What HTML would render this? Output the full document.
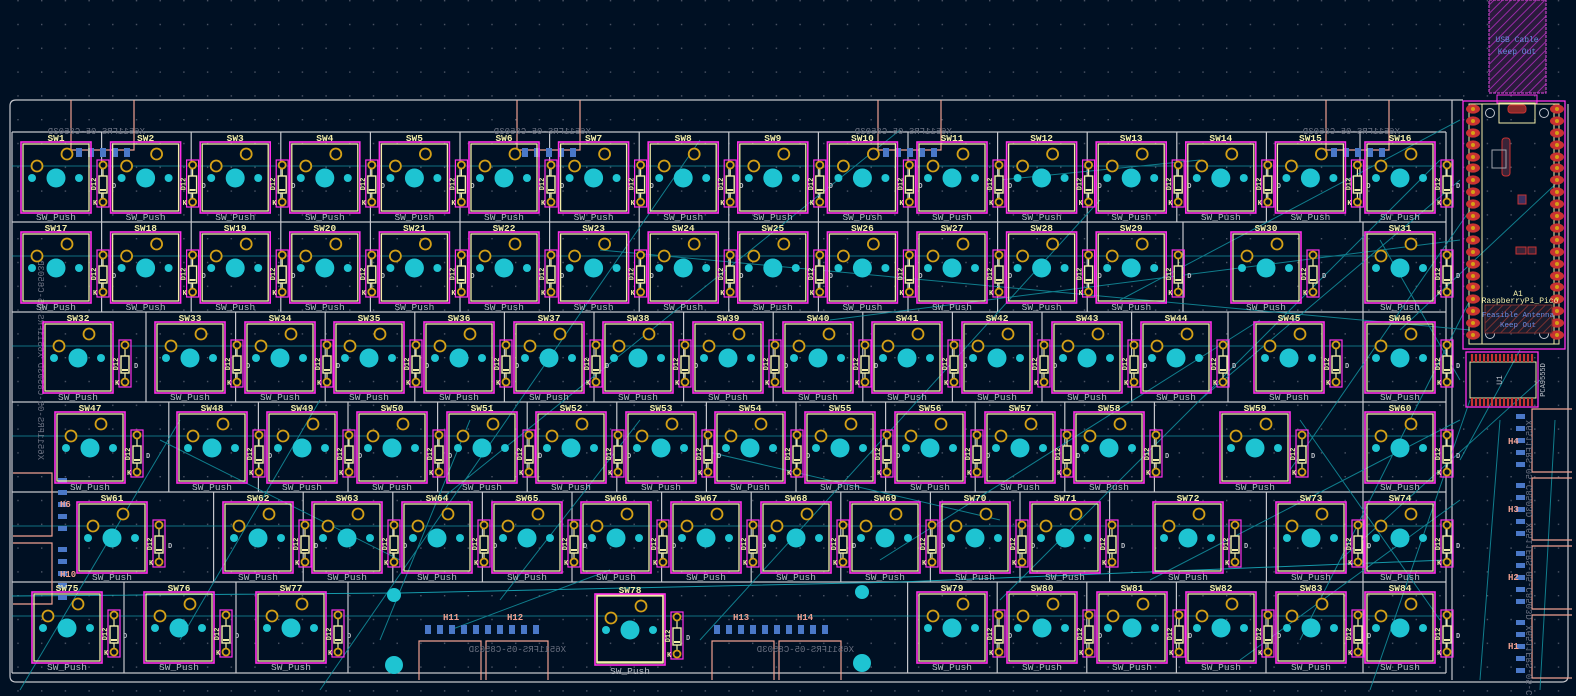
<!DOCTYPE html>
<html><head><meta charset="utf-8"><style>
html,body{margin:0;padding:0;background:#001023;overflow:hidden}
svg{display:block}
text{font-family:"Liberation Mono","DejaVu Sans Mono",monospace}
.l{fill:#f2eda8;font-size:9.5px;text-anchor:middle;font-weight:bold}
.p{fill:#b8bcc4;font-size:9.5px;text-anchor:middle}
.d{fill:#f2eda8;font-size:7px;font-weight:bold}
.g{stroke:#c4c6cc;stroke-width:1.2;fill:none}
.t{stroke:#13909f;stroke-width:1;fill:none;opacity:.85}
.s{stroke:#f0a090;stroke-width:1.2;fill:none}
.m{fill:#6a7080;font-size:9px}
</style></head><body>
<svg width="1576" height="696" viewBox="0 0 1576 696" xmlns="http://www.w3.org/2000/svg">
<defs>
<pattern id="dots" x="17.3" y="0" width="23.7" height="23.8" patternUnits="userSpaceOnUse">
<rect x="0" y="0" width="1.4" height="1.4" fill="#4d5566"/>
</pattern>
<g id="sw">
<rect x="-35" y="10" width="70" height="71" fill="none" stroke="#ff2ee8" stroke-width="1.6"/>
<rect x="-33" y="12" width="66" height="67" fill="none" stroke="#f2eda8" stroke-width="1.3"/>
<circle cx="0" cy="46" r="9.5" fill="#1ec4d2"/>
<circle cx="-24" cy="46" r="4" fill="#1ec4d2"/>
<circle cx="23" cy="46" r="4" fill="#1ec4d2"/>
<circle cx="11" cy="22" r="5.5" fill="#001023" stroke="#d4a017" stroke-width="1.8"/>
<circle cx="-19" cy="34" r="5.5" fill="#001023" stroke="#d4a017" stroke-width="1.8"/>
</g>
<g id="di">
<rect x="41" y="28" width="12" height="47" fill="none" stroke="#ff2ee8" stroke-width="1.2"/>
<line x1="47" y1="33" x2="47" y2="70" stroke="#f2eda8" stroke-width="1.2"/>
<rect x="43" y="44" width="8" height="17" fill="#001023" stroke="#f2eda8" stroke-width="1.4"/>
<rect x="44" y="57" width="6" height="2" fill="#f2eda8"/>
<circle cx="47" cy="33" r="3.5" fill="#001023" stroke="#d4a017" stroke-width="1.8"/>
<circle cx="47" cy="70" r="3.5" fill="#001023" stroke="#d4a017" stroke-width="1.8"/>
<text x="37" y="73" class="d">K</text>
<text transform="translate(40,52) rotate(-90)" class="d" text-anchor="middle" font-size="8">D12</text>
<text x="56" y="56" class="d" style="fill:#b8bcc4">D</text>
</g>
<pattern id="hatch" width="6" height="6" patternUnits="userSpaceOnUse" patternTransform="rotate(45)">
<rect width="6" height="6" fill="#2a1b3c"/><line x1="0" y1="0" x2="0" y2="6" stroke="#9a2aa8" stroke-width="2"/>
</pattern>
<pattern id="hatch2" width="6" height="6" patternUnits="userSpaceOnUse" patternTransform="rotate(45)">
<rect width="6" height="6" fill="#1b1c2c"/><line x1="0" y1="0" x2="0" y2="6" stroke="#7a3030" stroke-width="2"/>
</pattern>
<g id="pad"><ellipse cx="0" cy="0" rx="7" ry="4.6" fill="#c83232"/><circle cx="0" cy="0" r="2" fill="#d4a017"/></g>
</defs>
<rect width="1576" height="696" fill="#001023"/>
<rect width="1576" height="696" fill="url(#dots)"/>

<path d="M16 100 H1463 M10 106 Q10 100 16 100 M10 106 V676 Q10 682 16 682 H1562 Q1568 682 1568 676 V104" class="g"/>
<line x1="1452" y1="100" x2="1452" y2="680" class="g"/>

<g class="g">
<path d="M12 132 H1446 M12 222 H1446 M12 312 H1446 M12 402 H1446 M12 492 H1446 M12 582 H1446 M12 673 H1446 M12 132 V673 M1446 132 V673"/>
<path d="M101.6 132V222M191.2 132V222M280.8 132V222M370.4 132V222M460 132V222M549.6 132V222M639.2 132V222M728.8 132V222M818.4 132V222M908 132V222M997.6 132V222M1087.2 132V222M1176.8 132V222M1266.4 132V222M1360 132V222"/>
<path d="M101.6 222V312M191.2 222V312M280.8 222V312M370.4 222V312M460 222V312M549.6 222V312M639.2 222V312M728.8 222V312M818.4 222V312M908 222V312M997.6 222V312M1087.2 222V312M1183 222V312M1363 222V312"/>
<path d="M146 312V402M235.6 312V402M325.2 312V402M414.8 312V402M504.4 312V402M594 312V402M683.6 312V402M773.2 312V402M862.8 312V402M952.4 312V402M1042 312V402M1131.6 312V402M1228 312V402M1363 312V402"/>
<path d="M168.8 402V492M258.4 402V492M348 402V492M437.6 402V492M527.2 402V492M616.8 402V492M706.4 402V492M796 402V492M885.6 402V492M975.2 402V492M1064.8 402V492M1154.4 402V492M1363 402V492"/>
<path d="M213.6 492V582M303.2 492V582M392.8 492V582M482.4 492V582M572 492V582M661.6 492V582M751.2 492V582M840.8 492V582M930.4 492V582M1020 492V582M1109.6 492V582M1266.4 492V582M1363 492V582"/>
<path d="M124 582V673M236 582V673M348 582V673M907.6 582V673M997.2 582V673M1086.8 582V673M1176.4 582V673M1266 582V673M1363 582V673"/>
</g>

<g class="t">
<path d="M12 166H1446M12 256H1446M12 346H1446M12 436H1446M12 526H1446M12 616H1446" stroke="#19b0c0" opacity=".7"/>
<path d="M320 690 L700 140 M440 500 L900 130 M700 640 L1100 200 M1000 600 L1440 160 M1200 400 L1460 180 M1300 640 L1470 300 M830 320 L1460 240 M600 250 L1470 330 M380 640 L470 420 M1150 580 L1460 420 M20 690 L180 420 M180 640 L320 400 M880 560 L1260 320 M1120 300 L1460 120 M1240 660 L1460 500 M1370 690 L1470 400 M500 600 L640 420 M1000 180 L1200 160 M1380 240 L1460 380 M1290 470 L1470 210 M1400 330 L1560 180 M1340 560 L1540 380 M700 450 L1000 520 M160 440 L400 560 M450 630 L610 570 M1300 420 L1440 620 M1460 460 L1520 350 M1480 680 L1500 420 M1540 690 L1555 420"/>
<path d="M12 596 L400 593 L900 582 L1446 560" stroke="#19b0c0"/>
</g>

<g class="s">
<path d="M71 100V150H134V100 M517 100V150H580V100 M878 100V150H941V100 M1326 100V150H1389V100"/>
<path d="M419 680V641H481V680 M486 680V641H548V680 M712 680V641H774V680 M779 680V641H841V680"/>
<path d="M13 473H52V536H13 M13 543H52V604H13"/>
<path d="M1572 409H1532V472H1572 M1572 478H1532V540H1572 M1572 546H1532V609H1572 M1572 615H1532V678H1572"/>
</g>
<g fill="#4a78c8">
<g id="tp"><rect x="76" y="148" width="6" height="9"/><rect x="88" y="148" width="6" height="9"/><rect x="100" y="148" width="6" height="9"/><rect x="112" y="148" width="6" height="9"/><rect x="124" y="148" width="6" height="9"/></g>
<use href="#tp" x="446"/><use href="#tp" x="807"/><use href="#tp" x="1255"/>
<use href="#tp" x="349" y="477"/><use href="#tp" x="409" y="477"/><use href="#tp" x="638" y="477"/><use href="#tp" x="698" y="477"/>
<g id="lp"><rect x="58" y="478" width="9" height="5"/><rect x="58" y="490" width="9" height="5"/><rect x="58" y="502" width="9" height="5"/><rect x="58" y="514" width="9" height="5"/><rect x="58" y="526" width="9" height="5"/></g>
<use href="#lp" y="69"/>
<g id="rp"><rect x="1516" y="414" width="9" height="5"/><rect x="1516" y="426" width="9" height="5"/><rect x="1516" y="438" width="9" height="5"/><rect x="1516" y="450" width="9" height="5"/><rect x="1516" y="462" width="9" height="5"/></g>
<use href="#rp" y="69"/><use href="#rp" y="137"/><use href="#rp" y="206"/>
</g>
<g class="m">
<text x="62" y="134" transform="scale(-1,1) translate(-207,0)">X6511FRS-05-C8503D</text>
<text x="508" y="134" transform="scale(-1,1) translate(-1099,0)">X6511FRS-05-C8503D</text>
<text x="869" y="134" transform="scale(-1,1) translate(-1821,0)">X6511FRS-05-C8503D</text>
<text x="1317" y="134" transform="scale(-1,1) translate(-2717,0)">X6511FRS-05-C8503D</text>
<text x="400" y="652" transform="scale(-1,1) translate(-966,0)">X6511FRS-05-C8503D</text>
<text x="688" y="652" transform="scale(-1,1) translate(-1542,0)">X6511FRS-05-C8503D</text>
<text transform="translate(38,460) rotate(90) scale(-1,1)">X6511FRS-05-C8503D X6511FRS-05-C8503D</text>
<text transform="translate(1532,420) rotate(90) scale(1,-1)">X6511FRS-05-C8503D X6511FRS-05-C8503D X6511FRS-05-C8503D</text>
</g>
<g fill="#f0a090" font-size="9" font-weight="bold">
<text x="443" y="620">H11</text><text x="507" y="620">H12</text><text x="733" y="620">H13</text><text x="797" y="620">H14</text>
<text x="1508" y="444">H4</text><text x="1508" y="512">H3</text><text x="1508" y="580">H2</text><text x="1508" y="649">H1</text>
<text x="60" y="507">H6</text><text x="60" y="577">H10</text>
</g>
<g fill="#1ec4d2"><circle cx="394" cy="595" r="7"/><circle cx="394" cy="665" r="9"/><circle cx="862" cy="592" r="7"/><circle cx="862" cy="663" r="9"/></g>

<g id="sws">
<g transform="translate(56,132)"><use href="#sw"/><use href="#di"/><text class="l" y="9">SW1</text><text class="p" y="88">SW_Push</text></g>
<g transform="translate(145.6,132)"><use href="#sw"/><use href="#di"/><text class="l" y="9">SW2</text><text class="p" y="88">SW_Push</text></g>
<g transform="translate(235.2,132)"><use href="#sw"/><use href="#di"/><text class="l" y="9">SW3</text><text class="p" y="88">SW_Push</text></g>
<g transform="translate(324.8,132)"><use href="#sw"/><use href="#di"/><text class="l" y="9">SW4</text><text class="p" y="88">SW_Push</text></g>
<g transform="translate(414.4,132)"><use href="#sw"/><use href="#di"/><text class="l" y="9">SW5</text><text class="p" y="88">SW_Push</text></g>
<g transform="translate(504,132)"><use href="#sw"/><use href="#di"/><text class="l" y="9">SW6</text><text class="p" y="88">SW_Push</text></g>
<g transform="translate(593.6,132)"><use href="#sw"/><use href="#di"/><text class="l" y="9">SW7</text><text class="p" y="88">SW_Push</text></g>
<g transform="translate(683.2,132)"><use href="#sw"/><use href="#di"/><text class="l" y="9">SW8</text><text class="p" y="88">SW_Push</text></g>
<g transform="translate(772.8,132)"><use href="#sw"/><use href="#di"/><text class="l" y="9">SW9</text><text class="p" y="88">SW_Push</text></g>
<g transform="translate(862.4,132)"><use href="#sw"/><use href="#di"/><text class="l" y="9">SW10</text><text class="p" y="88">SW_Push</text></g>
<g transform="translate(952,132)"><use href="#sw"/><use href="#di"/><text class="l" y="9">SW11</text><text class="p" y="88">SW_Push</text></g>
<g transform="translate(1041.6,132)"><use href="#sw"/><use href="#di"/><text class="l" y="9">SW12</text><text class="p" y="88">SW_Push</text></g>
<g transform="translate(1131.2,132)"><use href="#sw"/><use href="#di"/><text class="l" y="9">SW13</text><text class="p" y="88">SW_Push</text></g>
<g transform="translate(1220.8,132)"><use href="#sw"/><use href="#di"/><text class="l" y="9">SW14</text><text class="p" y="88">SW_Push</text></g>
<g transform="translate(1310.4,132)"><use href="#sw"/><use href="#di"/><text class="l" y="9">SW15</text><text class="p" y="88">SW_Push</text></g>
<g transform="translate(1400,132)"><use href="#sw"/><use href="#di"/><text class="l" y="9">SW16</text><text class="p" y="88">SW_Push</text></g>

<g transform="translate(56,222)"><use href="#sw"/><use href="#di"/><text class="l" y="9">SW17</text><text class="p" y="88">SW_Push</text></g>
<g transform="translate(145.6,222)"><use href="#sw"/><use href="#di"/><text class="l" y="9">SW18</text><text class="p" y="88">SW_Push</text></g>
<g transform="translate(235.2,222)"><use href="#sw"/><use href="#di"/><text class="l" y="9">SW19</text><text class="p" y="88">SW_Push</text></g>
<g transform="translate(324.8,222)"><use href="#sw"/><use href="#di"/><text class="l" y="9">SW20</text><text class="p" y="88">SW_Push</text></g>
<g transform="translate(414.4,222)"><use href="#sw"/><use href="#di"/><text class="l" y="9">SW21</text><text class="p" y="88">SW_Push</text></g>
<g transform="translate(504,222)"><use href="#sw"/><use href="#di"/><text class="l" y="9">SW22</text><text class="p" y="88">SW_Push</text></g>
<g transform="translate(593.6,222)"><use href="#sw"/><use href="#di"/><text class="l" y="9">SW23</text><text class="p" y="88">SW_Push</text></g>
<g transform="translate(683.2,222)"><use href="#sw"/><use href="#di"/><text class="l" y="9">SW24</text><text class="p" y="88">SW_Push</text></g>
<g transform="translate(772.8,222)"><use href="#sw"/><use href="#di"/><text class="l" y="9">SW25</text><text class="p" y="88">SW_Push</text></g>
<g transform="translate(862.4,222)"><use href="#sw"/><use href="#di"/><text class="l" y="9">SW26</text><text class="p" y="88">SW_Push</text></g>
<g transform="translate(952,222)"><use href="#sw"/><use href="#di"/><text class="l" y="9">SW27</text><text class="p" y="88">SW_Push</text></g>
<g transform="translate(1041.6,222)"><use href="#sw"/><use href="#di"/><text class="l" y="9">SW28</text><text class="p" y="88">SW_Push</text></g>
<g transform="translate(1131.2,222)"><use href="#sw"/><use href="#di"/><text class="l" y="9">SW29</text><text class="p" y="88">SW_Push</text></g>
<g transform="translate(1266,222)"><use href="#sw"/><use href="#di"/><text class="l" y="9">SW30</text><text class="p" y="88">SW_Push</text></g>
<g transform="translate(1400,222)"><use href="#sw"/><use href="#di"/><text class="l" y="9">SW31</text><text class="p" y="88">SW_Push</text></g>

<g transform="translate(78,312)"><use href="#sw"/><use href="#di"/><text class="l" y="9">SW32</text><text class="p" y="88">SW_Push</text></g>
<g transform="translate(190,312)"><use href="#sw"/><use href="#di"/><text class="l" y="9">SW33</text><text class="p" y="88">SW_Push</text></g>
<g transform="translate(280,312)"><use href="#sw"/><use href="#di"/><text class="l" y="9">SW34</text><text class="p" y="88">SW_Push</text></g>
<g transform="translate(369,312)"><use href="#sw"/><use href="#di"/><text class="l" y="9">SW35</text><text class="p" y="88">SW_Push</text></g>
<g transform="translate(459,312)"><use href="#sw"/><use href="#di"/><text class="l" y="9">SW36</text><text class="p" y="88">SW_Push</text></g>
<g transform="translate(549,312)"><use href="#sw"/><use href="#di"/><text class="l" y="9">SW37</text><text class="p" y="88">SW_Push</text></g>
<g transform="translate(638,312)"><use href="#sw"/><use href="#di"/><text class="l" y="9">SW38</text><text class="p" y="88">SW_Push</text></g>
<g transform="translate(728,312)"><use href="#sw"/><use href="#di"/><text class="l" y="9">SW39</text><text class="p" y="88">SW_Push</text></g>
<g transform="translate(818,312)"><use href="#sw"/><use href="#di"/><text class="l" y="9">SW40</text><text class="p" y="88">SW_Push</text></g>
<g transform="translate(907,312)"><use href="#sw"/><use href="#di"/><text class="l" y="9">SW41</text><text class="p" y="88">SW_Push</text></g>
<g transform="translate(997,312)"><use href="#sw"/><use href="#di"/><text class="l" y="9">SW42</text><text class="p" y="88">SW_Push</text></g>
<g transform="translate(1087,312)"><use href="#sw"/><use href="#di"/><text class="l" y="9">SW43</text><text class="p" y="88">SW_Push</text></g>
<g transform="translate(1176,312)"><use href="#sw"/><use href="#di"/><text class="l" y="9">SW44</text><text class="p" y="88">SW_Push</text></g>
<g transform="translate(1289,312)"><use href="#sw"/><use href="#di"/><text class="l" y="9">SW45</text><text class="p" y="88">SW_Push</text></g>
<g transform="translate(1400,312)"><use href="#sw"/><use href="#di"/><text class="l" y="9">SW46</text><text class="p" y="88">SW_Push</text></g>

<g transform="translate(90,402)"><use href="#sw"/><use href="#di"/><text class="l" y="9">SW47</text><text class="p" y="88">SW_Push</text></g>
<g transform="translate(212,402)"><use href="#sw"/><use href="#di"/><text class="l" y="9">SW48</text><text class="p" y="88">SW_Push</text></g>
<g transform="translate(302,402)"><use href="#sw"/><use href="#di"/><text class="l" y="9">SW49</text><text class="p" y="88">SW_Push</text></g>
<g transform="translate(392,402)"><use href="#sw"/><use href="#di"/><text class="l" y="9">SW50</text><text class="p" y="88">SW_Push</text></g>
<g transform="translate(482,402)"><use href="#sw"/><use href="#di"/><text class="l" y="9">SW51</text><text class="p" y="88">SW_Push</text></g>
<g transform="translate(571,402)"><use href="#sw"/><use href="#di"/><text class="l" y="9">SW52</text><text class="p" y="88">SW_Push</text></g>
<g transform="translate(661,402)"><use href="#sw"/><use href="#di"/><text class="l" y="9">SW53</text><text class="p" y="88">SW_Push</text></g>
<g transform="translate(750,402)"><use href="#sw"/><use href="#di"/><text class="l" y="9">SW54</text><text class="p" y="88">SW_Push</text></g>
<g transform="translate(840,402)"><use href="#sw"/><use href="#di"/><text class="l" y="9">SW55</text><text class="p" y="88">SW_Push</text></g>
<g transform="translate(930,402)"><use href="#sw"/><use href="#di"/><text class="l" y="9">SW56</text><text class="p" y="88">SW_Push</text></g>
<g transform="translate(1020,402)"><use href="#sw"/><use href="#di"/><text class="l" y="9">SW57</text><text class="p" y="88">SW_Push</text></g>
<g transform="translate(1109,402)"><use href="#sw"/><use href="#di"/><text class="l" y="9">SW58</text><text class="p" y="88">SW_Push</text></g>
<g transform="translate(1255,402)"><use href="#sw"/><use href="#di"/><text class="l" y="9">SW59</text><text class="p" y="88">SW_Push</text></g>
<g transform="translate(1400,402)"><use href="#sw"/><use href="#di"/><text class="l" y="9">SW60</text><text class="p" y="88">SW_Push</text></g>

<g transform="translate(112,492)"><use href="#sw"/><use href="#di"/><text class="l" y="9">SW61</text><text class="p" y="88">SW_Push</text></g>
<g transform="translate(258,492)"><use href="#sw"/><use href="#di"/><text class="l" y="9">SW62</text><text class="p" y="88">SW_Push</text></g>
<g transform="translate(347,492)"><use href="#sw"/><use href="#di"/><text class="l" y="9">SW63</text><text class="p" y="88">SW_Push</text></g>
<g transform="translate(437,492)"><use href="#sw"/><use href="#di"/><text class="l" y="9">SW64</text><text class="p" y="88">SW_Push</text></g>
<g transform="translate(527,492)"><use href="#sw"/><use href="#di"/><text class="l" y="9">SW65</text><text class="p" y="88">SW_Push</text></g>
<g transform="translate(616,492)"><use href="#sw"/><use href="#di"/><text class="l" y="9">SW66</text><text class="p" y="88">SW_Push</text></g>
<g transform="translate(706,492)"><use href="#sw"/><use href="#di"/><text class="l" y="9">SW67</text><text class="p" y="88">SW_Push</text></g>
<g transform="translate(796,492)"><use href="#sw"/><use href="#di"/><text class="l" y="9">SW68</text><text class="p" y="88">SW_Push</text></g>
<g transform="translate(885,492)"><use href="#sw"/><use href="#di"/><text class="l" y="9">SW69</text><text class="p" y="88">SW_Push</text></g>
<g transform="translate(975,492)"><use href="#sw"/><use href="#di"/><text class="l" y="9">SW70</text><text class="p" y="88">SW_Push</text></g>
<g transform="translate(1065,492)"><use href="#sw"/><use href="#di"/><text class="l" y="9">SW71</text><text class="p" y="88">SW_Push</text></g>
<g transform="translate(1188,492)"><use href="#sw"/><use href="#di"/><text class="l" y="9">SW72</text><text class="p" y="88">SW_Push</text></g>
<g transform="translate(1311,492)"><use href="#sw"/><use href="#di"/><text class="l" y="9">SW73</text><text class="p" y="88">SW_Push</text></g>
<g transform="translate(1400,492)"><use href="#sw"/><use href="#di"/><text class="l" y="9">SW74</text><text class="p" y="88">SW_Push</text></g>

<g transform="translate(67,582)"><use href="#sw"/><use href="#di"/><text class="l" y="9">SW75</text><text class="p" y="88">SW_Push</text></g>
<g transform="translate(179,582)"><use href="#sw"/><use href="#di"/><text class="l" y="9">SW76</text><text class="p" y="88">SW_Push</text></g>
<g transform="translate(291,582)"><use href="#sw"/><use href="#di"/><text class="l" y="9">SW77</text><text class="p" y="88">SW_Push</text></g>
<g transform="translate(630,584)"><rect x="-33" y="11" width="66" height="67" fill="none" stroke="#f2eda8" stroke-width="1.6"/><use href="#sw"/><use href="#di"/><text class="l" y="9">SW78</text><text class="p" y="90">SW_Push</text></g>
<g transform="translate(952,582)"><use href="#sw"/><use href="#di"/><text class="l" y="9">SW79</text><text class="p" y="88">SW_Push</text></g>
<g transform="translate(1042,582)"><use href="#sw"/><use href="#di"/><text class="l" y="9">SW80</text><text class="p" y="88">SW_Push</text></g>
<g transform="translate(1132,582)"><use href="#sw"/><use href="#di"/><text class="l" y="9">SW81</text><text class="p" y="88">SW_Push</text></g>
<g transform="translate(1221,582)"><use href="#sw"/><use href="#di"/><text class="l" y="9">SW82</text><text class="p" y="88">SW_Push</text></g>
<g transform="translate(1311,582)"><use href="#sw"/><use href="#di"/><text class="l" y="9">SW83</text><text class="p" y="88">SW_Push</text></g>
<g transform="translate(1400,582)"><use href="#sw"/><use href="#di"/><text class="l" y="9">SW84</text><text class="p" y="88">SW_Push</text></g>
</g>

<rect x="1489" y="0" width="57" height="93" fill="url(#hatch)" stroke="#c040c0" stroke-width="1.2" stroke-dasharray="3 1"/>
<text x="1517" y="42" fill="#6a8ae0" font-size="8" text-anchor="middle">USB Cable</text>
<text x="1517" y="54" fill="#6a8ae0" font-size="8" text-anchor="middle">Keep Out</text>
<rect x="1497" y="95" width="40" height="8" fill="none" stroke="#ff2ee8" stroke-width="1"/>

<rect x="1463" y="101" width="102" height="248" fill="none" stroke="#ff2ee8" stroke-width="1.3"/>
<rect x="1469" y="104" width="90" height="240" fill="none" stroke="#f2eda8" stroke-width="1"/>
<rect x="1482" y="104" width="72" height="240" fill="none" stroke="#f2eda8" stroke-width="1"/>
<rect x="1499" y="103" width="36" height="20" fill="none" stroke="#f2eda8" stroke-width="1"/>
<circle cx="1490" cy="113" r="4.5" fill="none" stroke="#c0c4cc"/><circle cx="1544" cy="113" r="4.5" fill="none" stroke="#c0c4cc"/>
<circle cx="1490" cy="334" r="4.5" fill="none" stroke="#c0c4cc"/><circle cx="1544" cy="334" r="4.5" fill="none" stroke="#c0c4cc"/>
<rect x="1508" y="105" width="18" height="8" rx="3" fill="#8a2a2a" stroke="#c83232"/>
<rect x="1502" y="138" width="8" height="38" rx="3" fill="#3a2438" stroke="#c83232"/>
<rect x="1492" y="150" width="14" height="18" fill="none" stroke="#a0a4ac"/>
<rect x="1518" y="195" width="8" height="9" fill="#3a3060" stroke="#c83232"/>
<rect x="1516" y="247" width="10" height="7" fill="#3a2438" stroke="#c83232"/><rect x="1528" y="247" width="8" height="7" fill="#3a2438" stroke="#c83232"/>
<g id="pc">
<use href="#pad" x="1473" y="109"/><use href="#pad" x="1473" y="121"/><use href="#pad" x="1473" y="133"/><use href="#pad" x="1473" y="145"/><use href="#pad" x="1473" y="157"/><use href="#pad" x="1473" y="168"/><use href="#pad" x="1473" y="180"/><use href="#pad" x="1473" y="192"/><use href="#pad" x="1473" y="204"/><use href="#pad" x="1473" y="216"/><use href="#pad" x="1473" y="228"/><use href="#pad" x="1473" y="240"/><use href="#pad" x="1473" y="252"/><use href="#pad" x="1473" y="264"/><use href="#pad" x="1473" y="276"/><use href="#pad" x="1473" y="287"/><use href="#pad" x="1473" y="299"/><use href="#pad" x="1473" y="311"/><use href="#pad" x="1473" y="323"/><use href="#pad" x="1473" y="335"/>
</g>
<use href="#pc" x="84"/>
<text x="1518" y="296" fill="#f2eda8" font-size="8" text-anchor="middle">A1</text>
<text x="1520" y="303" fill="#f2eda8" font-size="8" text-anchor="middle">RaspberryPi_Pico</text>
<rect x="1485" y="305" width="67" height="28" fill="url(#hatch2)" stroke="#7a3030"/>
<text x="1518" y="317" fill="#6a8ae0" font-size="7.5" text-anchor="middle">Feasible Antenna</text>
<text x="1518" y="327" fill="#6a8ae0" font-size="7.5" text-anchor="middle">Keep Out</text>

<rect x="1466" y="352" width="72" height="55" fill="none" stroke="#ff2ee8" stroke-width="1.3"/>
<rect x="1470" y="362" width="66" height="36" fill="none" stroke="#f2eda8" stroke-width="1"/>
<path d="M1472 354v8M1476 354v8M1480 354v8M1484 354v8M1488 354v8M1492 354v8M1496 354v8M1500 354v8M1504 354v8M1508 354v8M1512 354v8M1516 354v8M1520 354v8M1524 354v8M1528 354v8M1532 354v8 M1472 398v8M1476 398v8M1480 398v8M1484 398v8M1488 398v8M1492 398v8M1496 398v8M1500 398v8M1504 398v8M1508 398v8M1512 398v8M1516 398v8M1520 398v8M1524 398v8M1528 398v8M1532 398v8" stroke="#c83232" stroke-width="2.2"/>
<text transform="translate(1502,380) rotate(-90)" fill="#c0c4cc" font-size="8" text-anchor="middle">U1</text>
<text transform="translate(1545,380) rotate(-90)" fill="#c0c4cc" font-size="7" text-anchor="middle">PCA9555D</text>
</svg>
</body></html>
